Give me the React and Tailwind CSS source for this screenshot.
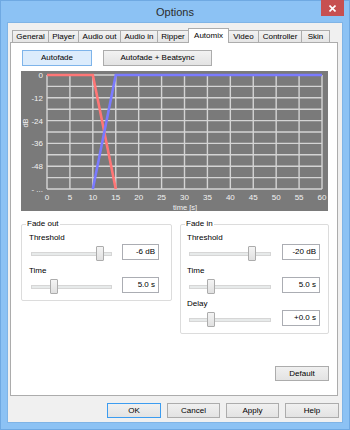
import React from "react";

const tabs = [
  { name: "General", w: "w-[37px]" },
  { name: "Player", w: "w-[31px]" },
  { name: "Audio out", w: "w-[43px]" },
  { name: "Audio in", w: "w-[38px]" },
  { name: "Ripper", w: "w-[32px]" },
  { name: "Automix", w: "w-[41px]", active: true },
  { name: "Video", w: "w-[31px]" },
  { name: "Controller", w: "w-[44px]" },
  { name: "Skin", w: "w-[29px]" },
];

// chart geometry (inside the 307x140 box)
const L = 26;
const R = 301;
const T = 4;
const B = 118;
const xAt = (s) => L + ((R - L) * s) / 60;

function Chart() {
  const xs = Array.from({ length: 13 }, (_, i) => L + ((R - L) * i) / 12);
  const ys = Array.from({ length: 11 }, (_, i) => T + ((B - T) * i) / 10);
  const yLabels = ["0", "-12", "-24", "-36", "-48", "- ..."];

  return (
    <svg width="307" height="140" className="block">
      <rect width="307" height="140" fill="#7a7a7a" />
      {ys.map((y) => (
        <line key={"h" + y} x1={L} x2={R} y1={y} y2={y} stroke="#d4d4d4" strokeWidth="1.4" />
      ))}
      {xs.map((x) => (
        <line key={"v" + x} x1={x} x2={x} y1={T} y2={B} stroke="#d4d4d4" strokeWidth="1.4" />
      ))}
      <polyline
        points={`${L},${T} ${xAt(10)},${T} ${xAt(15)},${B}`}
        fill="none"
        stroke="#ff7676"
        strokeWidth="2.6"
      />
      <polyline
        points={`${xAt(10)},${B} ${xAt(15)},${T} ${R},${T}`}
        fill="none"
        stroke="#7a7aff"
        strokeWidth="2.6"
      />
      {yLabels.map((t, i) => (
        <text
          key={t}
          x="22"
          y={T + i * 22.8 + 3}
          textAnchor="end"
          fontSize="8"
          fill="#f2f2f2"
          fontFamily="Liberation Sans, sans-serif"
        >
          {t}
        </text>
      ))}
      {xs.map((x, i) => (
        <text
          key={"l" + i}
          x={x}
          y="129"
          textAnchor="middle"
          fontSize="8"
          fill="#f2f2f2"
          fontFamily="Liberation Sans, sans-serif"
        >
          {i * 5}
        </text>
      ))}
      <text x="164" y="139" textAnchor="middle" fontSize="7.5" fill="#f2f2f2" fontFamily="Liberation Sans, sans-serif">
        time [s]
      </text>
      <text
        x="7"
        y="52"
        textAnchor="middle"
        fontSize="7.5"
        fill="#f2f2f2"
        fontFamily="Liberation Sans, sans-serif"
        transform="rotate(-90 7 52)"
      >
        dB
      </text>
    </svg>
  );
}

function Slider({ w, thumb }) {
  return (
    <div className={`relative h-[16px] flex items-center ${w}`}>
      <div className="w-full h-[4px] mt-[4px] border border-[#d6d6d6] bg-[#e7eaea]" />
      <div
        className={`absolute top-[2px] h-[15px] w-[8px] border border-[#acacac] rounded-[1px] bg-gradient-to-b from-[#f4f4f4] to-[#e0e0e0] ${thumb}`}
      />
    </div>
  );
}

function Field({ label, value, sliderW, thumb, inputW, gap }) {
  return (
    <div className="flex flex-col">
      <div className="h-[10px] leading-[10px]">{label}</div>
      <div className="mt-[1px] flex items-center h-[16px]">
        <div className="pl-[2px]">
          <Slider w={sliderW} thumb={thumb} />
        </div>
        <div
          className={`${gap} ${inputW} h-[16px] border border-[#abadb3] bg-white text-right pr-[3px] leading-[14px]`}
        >
          {value}
        </div>
      </div>
    </div>
  );
}

function Group({ title, w, px, children }) {
  return (
    <div className={`relative ${w} border border-[#dcdcdc] rounded-[2px] pt-[8px] pb-[7px] ${px}`}>
      <div className="absolute -top-[6px] left-[4px] bg-white px-[1px] leading-[10px]">{title}</div>
      <div className="flex flex-col gap-[6px]">{children}</div>
    </div>
  );
}

function Btn({ children, w, blue }) {
  return (
    <div
      className={`${w} h-[15px] flex items-center justify-center border ${
        blue ? "border-[#3c9cf0] bg-gradient-to-b from-[#f0f0f0] to-[#e3e3e3]" : "border-[#acacac] bg-gradient-to-b from-[#f0f0f0] to-[#e3e3e3]"
      }`}
    >
      {children}
    </div>
  );
}

export default function App() {
  return (
    <div className="w-[350px] h-[430px] bg-[#8cc2f4] border border-[#6fa9e2] flex flex-col px-[6px] pb-[6px] text-[8px] text-black font-['Liberation_Sans',Arial,sans-serif]">
      {/* title bar */}
      <div className="relative h-[21px] flex items-center justify-center">
        <span className="text-[11px] text-[#2b2b2b] mt-[2px]">Options</span>
        <div className="absolute -top-[1px] right-[-1px] w-[23px] h-[16px] bg-[#c75050] flex items-center justify-center">
          <svg width="7" height="7" viewBox="0 0 7 7">
            <path d="M0.5 0.5L6.5 6.5M6.5 0.5L0.5 6.5" stroke="#fff" strokeWidth="1.6" />
          </svg>
        </div>
      </div>

      {/* client area */}
      <div className="flex-1 bg-[#f0f0f0] border border-[#7fb4e6] flex flex-col pt-[5px] pl-[2px]">
        <div className="h-[14px] flex items-end pl-[2px] relative z-10">
          {tabs.map((t, i) =>
            t.active ? (
              <div
                key={t.name}
                className={`${t.w} h-[15px] -ml-px -mb-px bg-white border border-b-0 border-[#acacac] flex items-start justify-center pt-[2px] leading-[10px]`}
              >
                {t.name}
              </div>
            ) : (
              <div
                key={t.name}
                className={`${t.w} h-[12px] ${i ? "-ml-px" : ""} bg-gradient-to-b from-[#f2f2f2] to-[#e5e5e5] border border-b-0 border-[#acacac] flex items-center justify-center leading-[10px]`}
              >
                {t.name}
              </div>
            )
          )}
        </div>

        <div className="w-[328px] h-[354px] bg-white border border-[#acacac] flex flex-col">
          <div className="mt-[7px] ml-[11px] flex gap-[11px] h-[16px]">
            <div className="w-[70px] h-[16px] bg-[#dcecfc] border border-[#7eb4ea] flex items-center justify-center">
              Autofade
            </div>
            <div className="w-[109px] h-[16px] bg-gradient-to-b from-[#f2f2f2] to-[#e3e3e3] border border-[#acacac] flex items-center justify-center">
              Autofade + Beatsync
            </div>
          </div>

          <div className="mt-[5px] ml-[10px]">
            <Chart />
          </div>

          <div className="mt-[13px] ml-[10px] flex gap-[8px] items-start">
            <Group title="Fade out" w="w-[151px]" px="pl-[7px]">
              <Field label="Threshold" value="-6 dB" sliderW="w-[81px]" thumb="left-[65px]" inputW="w-[37px]" gap="ml-[10px]" />
              <Field label="Time" value="5.0 s" sliderW="w-[81px]" thumb="left-[19px]" inputW="w-[37px]" gap="ml-[10px]" />
            </Group>
            <Group title="Fade in" w="w-[149px]" px="pl-[6px]">
              <Field label="Threshold" value="-20 dB" sliderW="w-[82px]" thumb="left-[59px]" inputW="w-[38px]" gap="ml-[11px]" />
              <Field label="Time" value="5.0 s" sliderW="w-[82px]" thumb="left-[18px]" inputW="w-[38px]" gap="ml-[11px]" />
              <Field label="Delay" value="+0.0 s" sliderW="w-[82px]" thumb="left-[18px]" inputW="w-[38px]" gap="ml-[11px]" />
            </Group>
          </div>

          <div className="mt-[32px] self-end mr-[8px]">
            <Btn w="w-[54px]">Default</Btn>
          </div>
        </div>

        <div className="mt-[7px] flex justify-end gap-[6px] pr-[3px]">
          <Btn w="w-[54px]" blue>OK</Btn>
          <Btn w="w-[53px]">Cancel</Btn>
          <Btn w="w-[53px]">Apply</Btn>
          <Btn w="w-[54px]">Help</Btn>
        </div>
      </div>
    </div>
  );
}
